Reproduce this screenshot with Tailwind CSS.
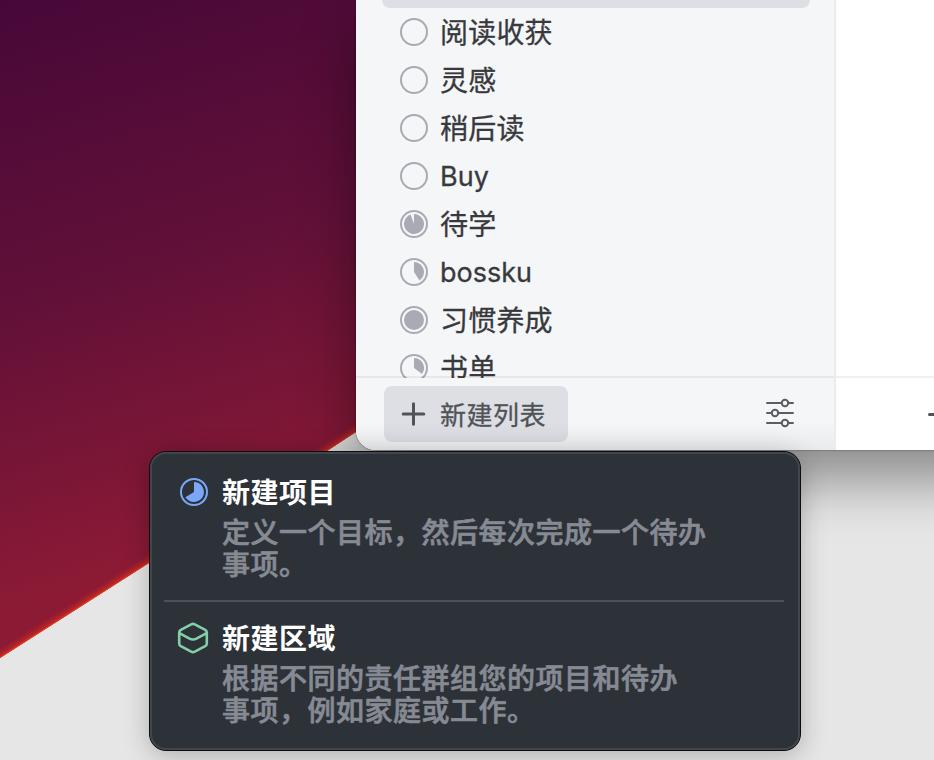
<!DOCTYPE html>
<html lang="zh-CN">
<head>
<meta charset="utf-8">
<title>新建列表</title>
<script src="https://cdn.jsdelivr.net/npm/@tailwindcss/browser@4"></script>
</head>
<body class="font-['Inter','Noto_Sans_CJK_SC',sans-serif]">
<main class="relative h-[760px] w-[934px] overflow-hidden bg-[#e5e6e5]">
  <!-- wallpaper -->
  <svg class="absolute inset-0" width="934" height="760" viewBox="0 0 934 760">
    <defs>
      <linearGradient id="sky" gradientUnits="userSpaceOnUse" x1="0" y1="0" x2="170" y2="560">
        <stop offset="0" stop-color="#470838"/>
        <stop offset=".5" stop-color="#611038"/>
        <stop offset="1" stop-color="#8c1a35"/>
      </linearGradient>
      <filter id="soft" x="-10%" y="-10%" width="120%" height="120%"><feGaussianBlur stdDeviation="3"/></filter>
      <clipPath id="upper"><path d="M0 0H420V392L356 432L327 451L149 563L0 658Z"/></clipPath>
    </defs>
    <g clip-path="url(#upper)">
      <rect width="420" height="700" fill="url(#sky)"/>
      <path d="M-30 677L0 658L149 563L327 451L420 392" fill="none" stroke="#e83018" stroke-width="5" filter="url(#soft)"/>
      <path d="M-30 677L0 658L149 563L327 451L420 392" fill="none" stroke="#e8381c" stroke-width="2"/>
    </g>
  </svg>

  <!-- app window -->
  <section class="relative ml-[356px] flex h-[450px] w-[700px] rounded-bl-[20px] bg-white shadow-[0_30px_56px_rgba(0,0,0,0.4),0_0_2px_rgba(0,0,0,0.6)]">
    <aside class="flex w-[480px] shrink-0 flex-col rounded-bl-[20px] border-r-2 border-[#ebecef] bg-[#f5f6f8]">
      <div class="flex h-[378px] shrink-0 flex-col overflow-hidden">
        <div class="mx-[26px] mr-6 h-2 shrink-0 rounded-b-lg bg-[#dedfe5]"></div>
        <ul class="pl-11 text-[28px] tracking-[0.2px] text-[#38393c] [-webkit-text-stroke:0.3px]">
          <li class="flex h-12 items-center gap-3"><svg width="28" height="28" viewBox="0 0 28 28"><circle cx="14" cy="14" r="13" fill="none" stroke="#a9abb4" stroke-width="2"/></svg><span class="pt-[2px] leading-none">阅读收获</span></li>
          <li class="flex h-12 items-center gap-3"><svg width="28" height="28" viewBox="0 0 28 28"><circle cx="14" cy="14" r="13" fill="none" stroke="#a9abb4" stroke-width="2"/></svg><span class="pt-[2px] leading-none">灵感</span></li>
          <li class="flex h-12 items-center gap-3"><svg width="28" height="28" viewBox="0 0 28 28"><circle cx="14" cy="14" r="13" fill="none" stroke="#a9abb4" stroke-width="2"/></svg><span class="pt-[2px] leading-none">稍后读</span></li>
          <li class="flex h-12 items-center gap-3"><svg width="28" height="28" viewBox="0 0 28 28"><circle cx="14" cy="14" r="13" fill="none" stroke="#a9abb4" stroke-width="2"/></svg><span class="text-[27px] leading-none tracking-normal">Buy</span></li>
          <li class="flex h-12 items-center gap-3"><svg width="28" height="28" viewBox="0 0 28 28"><circle cx="14" cy="14" r="13" fill="none" stroke="#a9abb4" stroke-width="2"/><path d="M14 14V4A10 10 0 1 1 10.6 4.6Z" fill="#a9abb4"/></svg><span class="pt-[2px] leading-none">待学</span></li>
          <li class="flex h-12 items-center gap-3"><svg width="28" height="28" viewBox="0 0 28 28"><circle cx="14" cy="14" r="13" fill="none" stroke="#a9abb4" stroke-width="2"/><path d="M14 14V4A10 10 0 0 1 19.5 22.4Z" fill="#a9abb4"/></svg><span class="text-[27px] leading-none tracking-normal">bossku</span></li>
          <li class="flex h-12 items-center gap-3"><svg width="28" height="28" viewBox="0 0 28 28"><circle cx="14" cy="14" r="13" fill="none" stroke="#a9abb4" stroke-width="2"/><circle cx="14" cy="14" r="10" fill="#a9abb4"/></svg><span class="pt-[2px] leading-none">习惯养成</span></li>
          <li class="flex h-12 items-center gap-3"><svg width="28" height="28" viewBox="0 0 28 28"><circle cx="14" cy="14" r="13" fill="none" stroke="#a9abb4" stroke-width="2"/><path d="M14 14V4A10 10 0 0 1 22 20Z" fill="#a9abb4"/></svg><span class="pt-[2px] leading-none">书单</span></li>
        </ul>
      </div>
      <div class="relative -mt-[2px] flex h-[74px] shrink-0 items-start justify-between rounded-bl-[20px] border-t-2 border-black/6 bg-linear-to-b from-[#f5f6f8] from-60% to-[#eaebed] bg-clip-padding pt-2 pr-[39px] pl-7">
        <button class="flex h-14 w-[184px] items-center gap-[14px] rounded-lg bg-linear-to-b from-[#dedfe5] from-60% to-[#d8d9de] pl-[17px] text-[#505357]">
          <svg width="25" height="24" viewBox="0 0 25 24" fill="none" stroke="currentColor" stroke-width="3" stroke-linecap="round"><path d="M12.5 1.8V22.2M2.2 12H22.8"/></svg>
          <span class="pt-[3px] text-[26px] leading-none tracking-[0.5px] [-webkit-text-stroke:0.3px]">新建列表</span>
        </button>
        <svg class="mt-3" width="30" height="30" viewBox="0 0 30 30" fill="none" stroke="#5c5c65" stroke-width="2" stroke-linecap="round"><path d="M2 5H16M24 5H28M2 15H6M14 15H28M2 25H16M24 25H28"/><circle cx="20" cy="5" r="3.2"/><circle cx="10" cy="15" r="3.2"/><circle cx="20" cy="25" r="3.2"/></svg>
      </div>
    </aside>
    <div class="flex grow flex-col justify-end">
      <div class="h-[74px] border-t-2 border-[#f0f0f1] pt-[35px] pl-[92px]">
        <div class="h-[3px] w-6 rounded-full bg-[#505357]"></div>
      </div>
    </div>
  </section>

  <!-- popover menu -->
  <section class="absolute top-[451px] left-[149px] h-[300px] w-[652px] rounded-[17px] border border-[#0c0d0f] bg-[#2d3138] shadow-[0_4px_26px_rgba(0,0,0,0.25)]">
    <div class="h-full rounded-[16px] border-2 border-[#42464c] pt-[23px] pr-[14px] pl-3">
      <div class="flex h-[123px] gap-[14px] pl-4">
        <svg class="mt-px shrink-0" width="28" height="28" viewBox="0 0 28 28"><circle cx="14" cy="14" r="13" fill="none" stroke="#7aa7f8" stroke-width="2"/><path d="M14 14V4A10 10 0 1 1 5.4 19.2Z" fill="#7aa7f8"/></svg>
        <div class="text-[28px] tracking-[0.5px]">
          <h2 class="leading-[32px] font-bold text-white">新建项目</h2>
          <p class="mt-2 leading-[32px] font-medium text-[#868a93] [-webkit-text-stroke:0.7px]">定义一个目标，然后每次完成一个待办<br>事项。</p>
        </div>
      </div>
      <div class="h-[2px] bg-[#4c5059]"></div>
      <div class="flex gap-[13px] pt-[21px] pl-[13px]">
        <svg class="-mt-px shrink-0" width="32" height="32" viewBox="0 0 32 32" fill="none" stroke="#83cfa8" stroke-width="2.6" stroke-linejoin="round" stroke-linecap="round"><path d="M14.2 2.3Q16 1.4 17.8 2.3L28.2 7.8Q29.8 8.7 29.8 10.5V21.5Q29.8 23.3 28.2 24.2L17.8 29.7Q16 30.6 14.2 29.7L3.8 24.2Q2.2 23.3 2.2 21.5V10.5Q2.2 8.7 3.8 7.8Z"/><path d="M2.8 11.3L12.6 16.7Q16 18.4 19.4 16.7L29.2 11.3"/></svg>
        <div class="text-[28px] tracking-[0.5px]">
          <h2 class="leading-[32px] font-bold text-white">新建区域</h2>
          <p class="mt-2 leading-[32px] font-medium text-[#868a93] [-webkit-text-stroke:0.7px]">根据不同的责任群组您的项目和待办<br>事项，例如家庭或工作。</p>
        </div>
      </div>
    </div>
  </section>
</main>
</body>
</html>
